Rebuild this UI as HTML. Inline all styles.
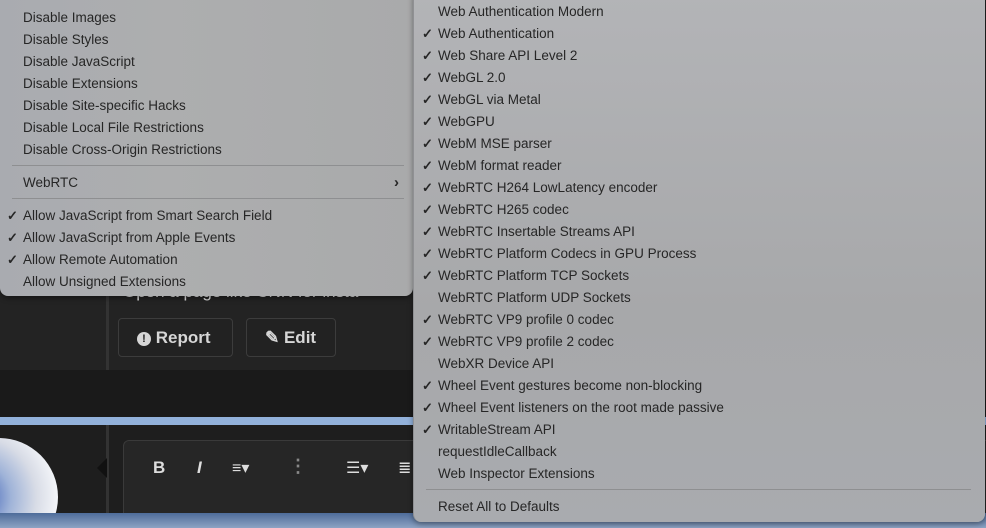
<!DOCTYPE html>
<html><head><meta charset="utf-8"><style>
*{margin:0;padding:0;box-sizing:border-box}
html,body{width:986px;height:528px;overflow:hidden}
body{background:#232323;font-family:"Liberation Sans",sans-serif;position:relative}
.a{position:absolute}
.menu{position:absolute;font-size:13.5px;color:#262626}
.row{position:absolute;height:22px;line-height:22px;white-space:nowrap}
.ck{position:absolute;left:-16px;font-size:13px;font-weight:bold}
.sep{position:absolute;height:1px;background:#8e8f91}
</style></head><body>
<div class="a" style="left:0;top:296px;width:986px;height:74px;background:#232323"></div>
<div class="a" style="left:106px;top:296px;width:3px;height:74px;background:#333"></div>
<div class="a" style="left:123px;top:282px;color:#ddd;font-size:17px">Open a page like CNN for insta</div>
<div class="a" style="left:118px;top:318px;width:115px;height:39px;border:1px solid #3c3c3c;border-radius:4px;background:#222;color:#d6d6d6;font-weight:bold;font-size:17px;line-height:37px;padding-left:18px"><span style="display:inline-block;width:14px;height:14px;border-radius:50%;background:#d6d6d6;color:#222;font-size:11px;line-height:14px;text-align:center;vertical-align:1px">!</span> Report</div>
<div class="a" style="left:246px;top:318px;width:90px;height:39px;border:1px solid #3c3c3c;border-radius:4px;background:#222;color:#d6d6d6;font-weight:bold;font-size:17px;line-height:37px;padding-left:18px">✎ Edit</div>
<div class="a" style="left:0;top:370px;width:986px;height:47px;background:#1a1a1a"></div>
<div class="a" style="left:0;top:417px;width:986px;height:8px;background:#92b1da"></div>
<div class="a" style="left:0;top:425px;width:986px;height:88px;background:#1e1e1e;overflow:hidden">
 <div class="a" style="left:-60px;top:13px;width:118px;height:118px;border-radius:50%;background:radial-gradient(circle at 30% 50%,#2a4fb0 0%,#9fb3d8 35%,#d8dce6 60%,#f2f4f8 80%)"></div>
 <div class="a" style="left:106px;top:0;width:3px;height:88px;background:#333"></div>
 <div class="a" style="left:123px;top:15px;width:880px;height:80px;border:1px solid #3a3a3a;border-radius:6px;background:#262626"></div>
 <div class="a" style="left:97px;top:33px;width:0;height:0;border-top:10px solid transparent;border-bottom:10px solid transparent;border-right:10px solid #111"></div>
 <div class="a" style="left:153px;top:33px;color:#ddd;font-weight:bold;font-size:17px">B</div>
 <div class="a" style="left:197px;top:33px;color:#ddd;font-weight:bold;font-style:italic;font-size:17px">I</div>
 <div class="a" style="left:232px;top:33px;color:#ddd;font-size:16px">≡▾</div>
 <div class="a" style="left:289px;top:31px;color:#888;font-size:18px;font-weight:bold">⋮</div>
 <div class="a" style="left:346px;top:33px;color:#ddd;font-size:16px">☰▾</div>
 <div class="a" style="left:398px;top:33px;color:#ddd;font-size:16px">≣</div>
</div>
<div class="a" style="left:0;top:513px;width:986px;height:15px;background:linear-gradient(#4e6c9a,#8da3c3)"></div>

<div class="menu" style="left:0;top:-6px;width:413px;height:302px;background:linear-gradient(90deg,#a9abb0,#adaeaf 40%,#a9aaab);border-radius:0 0 8px 8px;box-shadow:0 2px 6px rgba(0,0,0,.4)">
<div style="position:absolute;left:23px;top:1px">
<div class="row" style="top:12px">Disable Images</div>
<div class="row" style="top:34px">Disable Styles</div>
<div class="row" style="top:56px">Disable JavaScript</div>
<div class="row" style="top:78px">Disable Extensions</div>
<div class="row" style="top:100px">Disable Site-specific Hacks</div>
<div class="row" style="top:122px">Disable Local File Restrictions</div>
<div class="row" style="top:144px">Disable Cross-Origin Restrictions</div>
<div class="row" style="top:177px">WebRTC</div>
<div class="row" style="top:210px"><span class="ck">✓</span>Allow JavaScript from Smart Search Field</div>
<div class="row" style="top:232px"><span class="ck">✓</span>Allow JavaScript from Apple Events</div>
<div class="row" style="top:254px"><span class="ck">✓</span>Allow Remote Automation</div>
<div class="row" style="top:276px">Allow Unsigned Extensions</div>
</div>
<div class="row" style="left:394px;top:178px;font-size:15px;font-weight:bold">›</div>
<div class="sep" style="left:12px;top:171px;width:392px"></div>
<div class="sep" style="left:12px;top:204px;width:392px"></div>
</div>

<div class="menu" style="left:413px;top:-6px;width:572px;height:528px;background:linear-gradient(#b3b4b7,#a7a8aa 60%,#a9abaf);border-radius:0 0 8px 8px;border-left:1px solid #8f9093;box-shadow:0 2px 6px rgba(0,0,0,.4)">
<div style="position:absolute;left:24px;top:1px">
<div class="row" style="top:6px">Web Authentication Modern</div>
<div class="row" style="top:28px"><span class="ck">✓</span>Web Authentication</div>
<div class="row" style="top:50px"><span class="ck">✓</span>Web Share API Level 2</div>
<div class="row" style="top:72px"><span class="ck">✓</span>WebGL 2.0</div>
<div class="row" style="top:94px"><span class="ck">✓</span>WebGL via Metal</div>
<div class="row" style="top:116px"><span class="ck">✓</span>WebGPU</div>
<div class="row" style="top:138px"><span class="ck">✓</span>WebM MSE parser</div>
<div class="row" style="top:160px"><span class="ck">✓</span>WebM format reader</div>
<div class="row" style="top:182px"><span class="ck">✓</span>WebRTC H264 LowLatency encoder</div>
<div class="row" style="top:204px"><span class="ck">✓</span>WebRTC H265 codec</div>
<div class="row" style="top:226px"><span class="ck">✓</span>WebRTC Insertable Streams API</div>
<div class="row" style="top:248px"><span class="ck">✓</span>WebRTC Platform Codecs in GPU Process</div>
<div class="row" style="top:270px"><span class="ck">✓</span>WebRTC Platform TCP Sockets</div>
<div class="row" style="top:292px">WebRTC Platform UDP Sockets</div>
<div class="row" style="top:314px"><span class="ck">✓</span>WebRTC VP9 profile 0 codec</div>
<div class="row" style="top:336px"><span class="ck">✓</span>WebRTC VP9 profile 2 codec</div>
<div class="row" style="top:358px">WebXR Device API</div>
<div class="row" style="top:380px"><span class="ck">✓</span>Wheel Event gestures become non-blocking</div>
<div class="row" style="top:402px"><span class="ck">✓</span>Wheel Event listeners on the root made passive</div>
<div class="row" style="top:424px"><span class="ck">✓</span>WritableStream API</div>
<div class="row" style="top:446px">requestIdleCallback</div>
<div class="row" style="top:468px">Web Inspector Extensions</div>
<div class="row" style="top:501px">Reset All to Defaults</div>
</div>
<div class="sep" style="left:12px;top:495px;width:545px"></div>
</div>
</body></html>
